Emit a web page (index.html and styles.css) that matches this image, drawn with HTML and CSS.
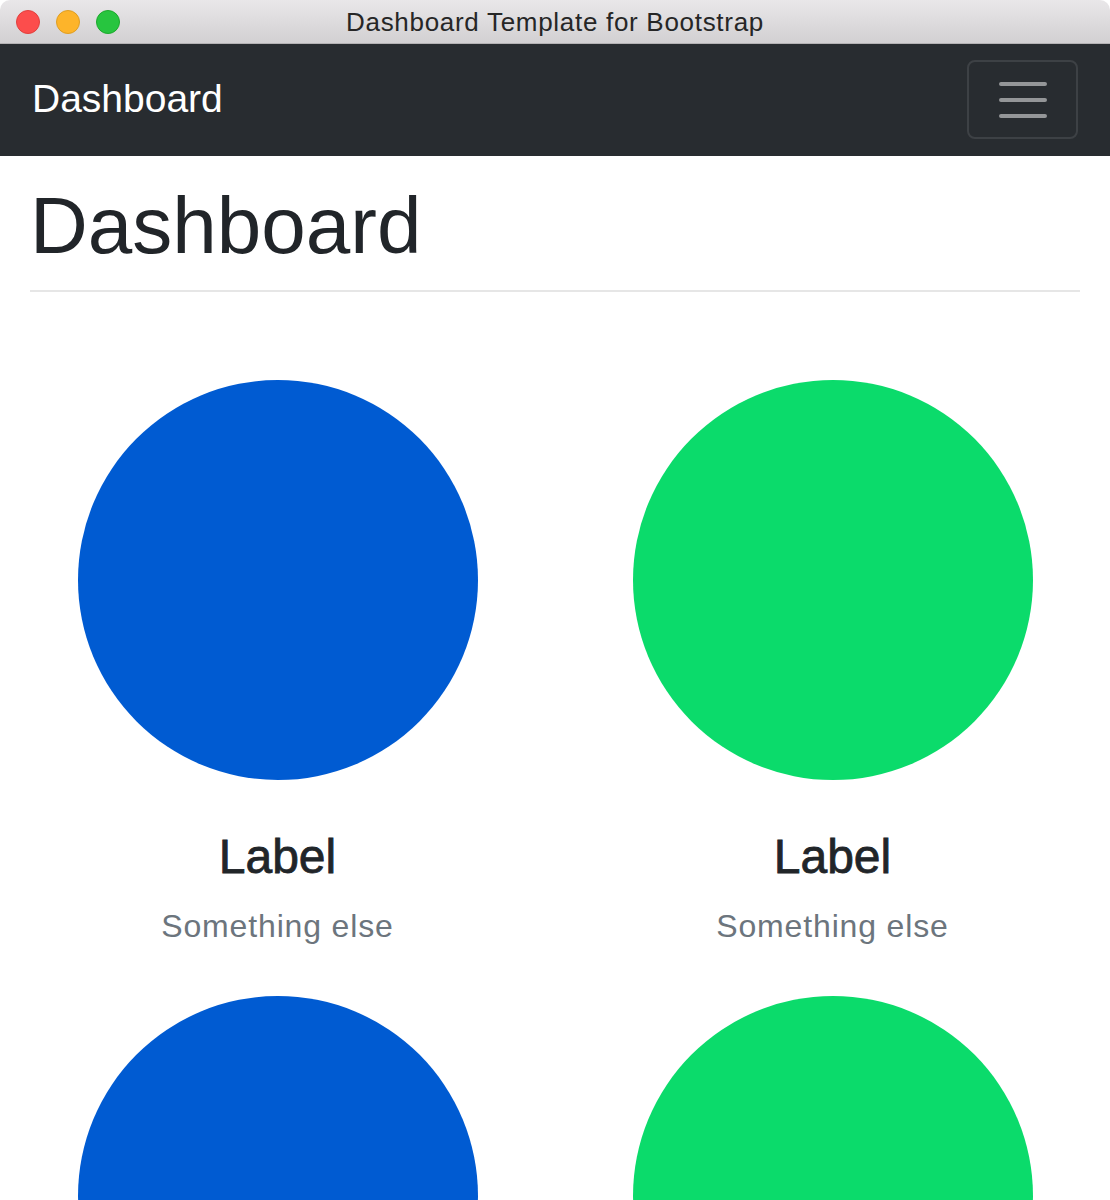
FILE: index.html
```html
<!DOCTYPE html>
<html lang="en">
  <head>
    <meta charset="utf-8" />
    <meta name="viewport" content="width=device-width, initial-scale=1.0" />
    <title>Dashboard Template for Bootstrap</title>
    <link rel="stylesheet" href="styles.css">
  </head>
  <body>
    <div class="titlebar">
      <div class="lights">
        <span class="light red"></span>
        <span class="light yellow"></span>
        <span class="light green"></span>
      </div>
      <div class="window-title">Dashboard Template for Bootstrap</div>
    </div>

    <nav class="navbar">
      <a class="brand" href="#">Dashboard</a>
      <button class="toggler" type="button" aria-label="Toggle navigation">
        <svg class="toggler-icon" viewBox="0 0 30 30" width="60" height="60">
          <path d="M4 7h22M4 15h22M4 23h22" stroke="rgba(255,255,255,0.5)" stroke-width="2" stroke-linecap="round" fill="none"/>
        </svg>
      </button>
    </nav>

    <main class="main">
      <h1 class="page-title">Dashboard</h1>

      <section class="placeholders">
        <div class="placeholder">
          <div class="circle blue"></div>
          <h4>Label</h4>
          <span class="muted">Something else</span>
        </div>
        <div class="placeholder">
          <div class="circle green"></div>
          <h4>Label</h4>
          <span class="muted">Something else</span>
        </div>
        <div class="placeholder">
          <div class="circle blue"></div>
          <h4>Label</h4>
          <span class="muted">Something else</span>
        </div>
        <div class="placeholder">
          <div class="circle green"></div>
          <h4>Label</h4>
          <span class="muted">Something else</span>
        </div>
      </section>
    </main>
  </body>
</html>
```

FILE: styles.css
```css
html, body {
    margin: 0;
    padding: 0;
    background: #fff;
}

body {
    font-family: "Liberation Sans", Arial, sans-serif;
    color: #212529;
    overflow: hidden;
}

/* window chrome */
.titlebar {
    position: relative;
    height: 43px;
    border-bottom: 1px solid #b4b2b4;
    border-radius: 10px 10px 0 0;
    background: linear-gradient(#e9e7e9, #d2d0d2);
    display: flex;
    align-items: center;
    justify-content: center;
}

.lights {
    position: absolute;
    left: 16px;
    top: 10px;
    display: flex;
    gap: 16px;
}

.light {
    display: block;
    width: 22px;
    height: 22px;
    border-radius: 50%;
    border: 1px solid;
}

.red {
    background: #fc4d4c;
    border-color: #e2403d;
}

.yellow {
    background: #fdb42a;
    border-color: #df9e22;
}

.green {
    background: #27c53f;
    border-color: #1ca92c;
}

.window-title {
    font-size: 26px;
    letter-spacing: 0.7px;
    color: #262626;
    margin-top: 1px;
}

/* navbar */
.navbar {
    background: #282c30;
    height: 112px;
    padding: 0 32px;
    box-sizing: border-box;
    display: flex;
    align-items: center;
    justify-content: space-between;
}

.brand {
    color: #fff;
    text-decoration: none;
    font-size: 39px;
    line-height: 60px;
    margin-top: -2px;
}

.toggler {
    width: 111px;
    height: 79px;
    margin-top: -1px;
    padding: 0;
    background: transparent;
    border: 2px solid rgba(255, 255, 255, 0.1);
    border-radius: 8px;
    display: flex;
    align-items: center;
    justify-content: center;
}

.toggler-icon {
    display: block;
}

/* content */
.main {
    padding: 0 30px;
}

.page-title {
    font-size: 80px;
    font-weight: 400;
    line-height: 96px;
    margin: 0;
    padding: 22px 0 16px;
    border-bottom: 2px solid #e6e6e6;
}

.placeholders {
    display: grid;
    grid-template-columns: 1fr 1fr;
    margin: 0 -30px;
    padding-top: 88px;
    text-align: center;
}

.placeholder {
    padding-bottom: 46px;
}

.circle {
    width: 400px;
    height: 400px;
    border-radius: 50%;
    margin: 0 auto 48px;
}

.circle.blue {
    background: #005bd2;
}

.circle.green {
    background: #0bdb6b;
}

.placeholder h4 {
    font-size: 48px;
    font-weight: 500;
    line-height: 57.6px;
    margin: 0 0 16px;
    -webkit-text-stroke: 0.8px #212529;
}

.muted {
    display: block;
    font-size: 32px;
    letter-spacing: 0.85px;
    line-height: 48px;
    color: #6c757d;
}
```
